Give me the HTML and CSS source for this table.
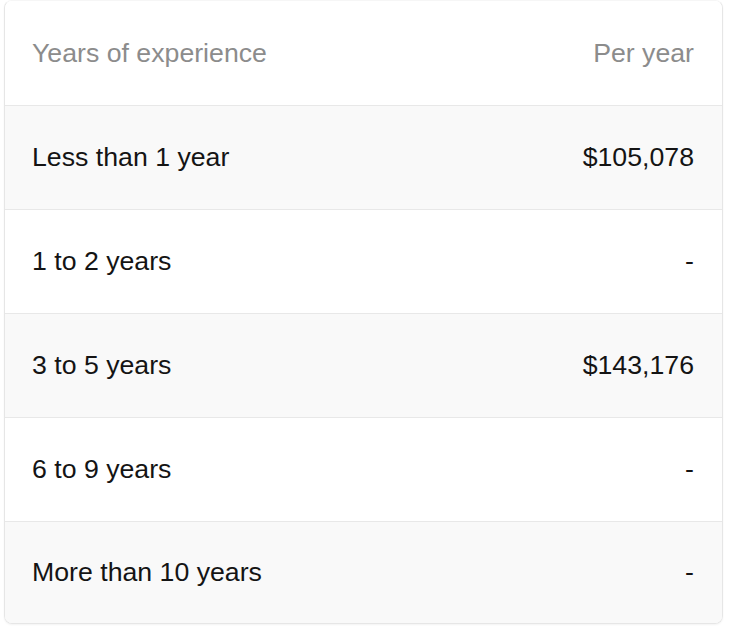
FILE: index.html
```html
<!DOCTYPE html>
<html>
<head>
<meta charset="utf-8">
<link rel="stylesheet" href="styles.css">
</head>
<body>
<div class="page">
  <div class="card">
    <div class="row head">
      <span>Years of experience</span>
      <span>Per year</span>
    </div>
    <div class="row alt">
      <span>Less than 1 year</span>
      <span>$105,078</span>
    </div>
    <div class="row">
      <span>1 to 2 years</span>
      <span>-</span>
    </div>
    <div class="row alt">
      <span>3 to 5 years</span>
      <span>$143,176</span>
    </div>
    <div class="row">
      <span>6 to 9 years</span>
      <span>-</span>
    </div>
    <div class="row alt last">
      <span>More than 10 years</span>
      <span>-</span>
    </div>
  </div>
</div>
</body>
</html>
```
FILE: styles.css
```css
html, body {
  margin: 0;
  padding: 0;
  background: #ffffff;
}
.page {
  padding: 0 5px 5px 4px;
}
.card {
  width: 719px;
  box-sizing: border-box;
  border: 1px solid #e6e6e6;
  border-top-color: #f6f6f6;
  border-radius: 8px;
  overflow: hidden;
  box-shadow: 0 1px 2px rgba(0,0,0,0.05);
  font-family: "Liberation Sans", Arial, sans-serif;
  font-size: 26.7px;
  color: #141414;
}
.row {
  display: flex;
  justify-content: space-between;
  align-items: center;
  height: 103px;
  padding: 0 28px 0 27px;
  border-bottom: 1px solid #e8e8e8;
  background: #ffffff;
}
.row.head {
  color: #8c8c8c;
  height: 104px;
}
.row.alt {
  background: #f9f9f9;
}
.row.last {
  border-bottom: none;
  height: 101px;
}
```
